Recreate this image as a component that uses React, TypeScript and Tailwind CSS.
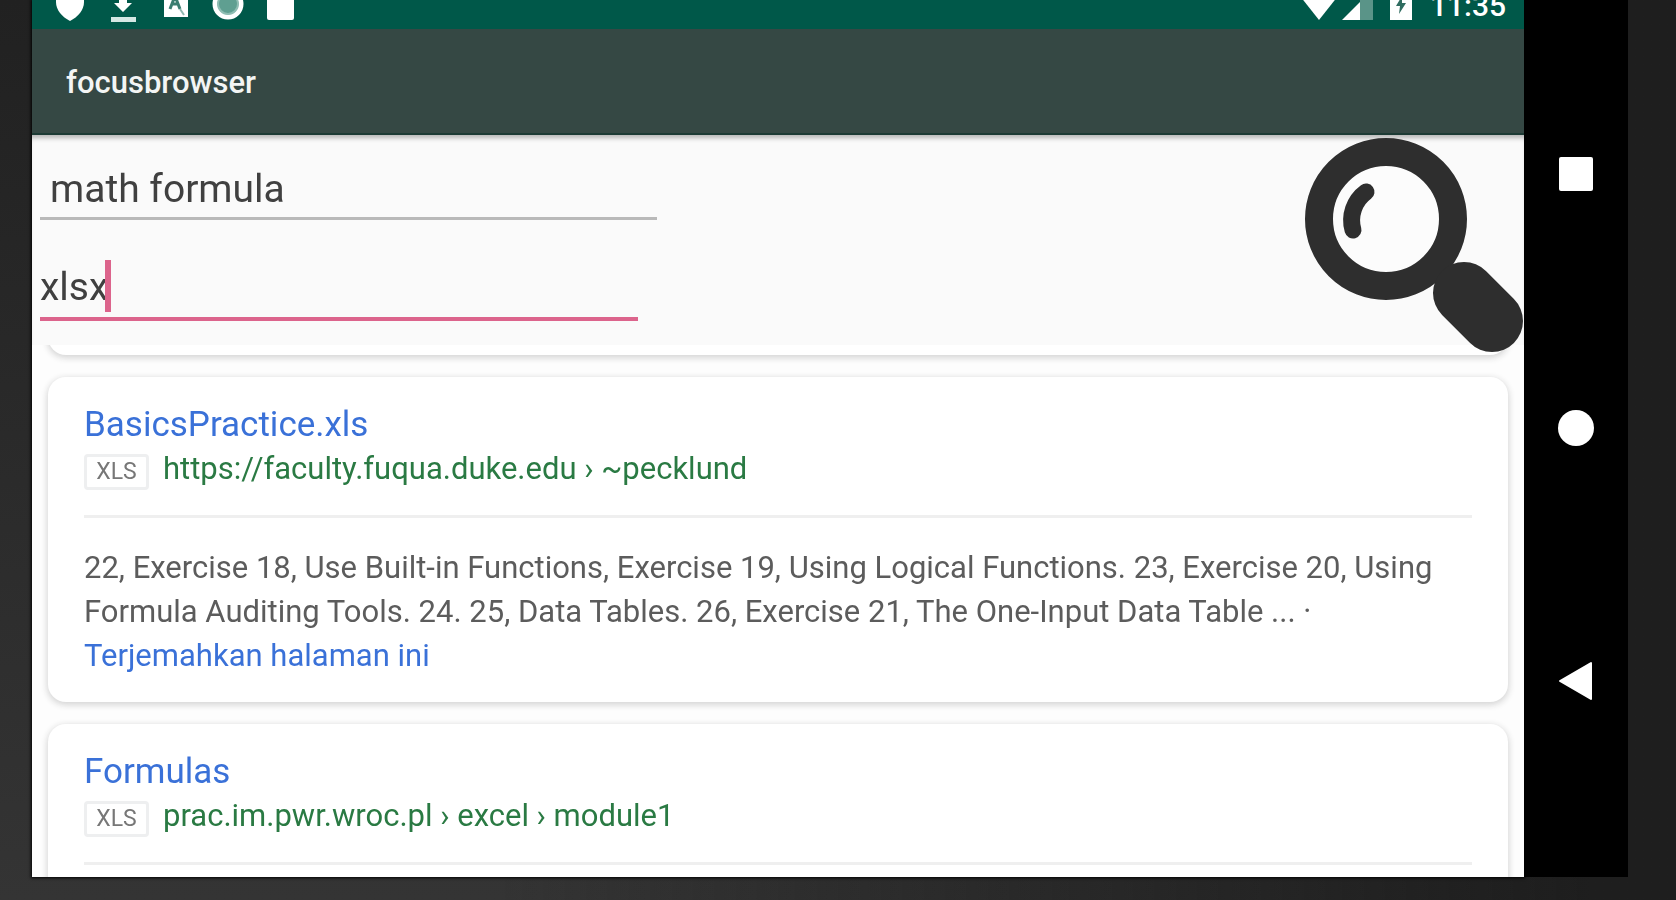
import { useState } from 'react';

type Result = {
  title: string;
  url: string;
  snippet?: string;
};

const results: Result[] = [
  {
    title: 'BasicsPractice.xls',
    url: 'https://faculty.fuqua.duke.edu › ~pecklund',
    snippet:
      '22, Exercise 18, Use Built-in Functions, Exercise 19, Using Logical Functions. 23, Exercise 20, Using Formula Auditing Tools. 24. 25, Data Tables. 26, Exercise 21, The One-Input Data Table ... ·',
  },
  {
    title: 'Formulas',
    url: 'prac.im.pwr.wroc.pl › excel › module1',
  },
];

function StatusBar() {
  return (
    <div className="flex h-[29px] shrink-0 items-start justify-between overflow-hidden bg-[#005849] pl-6 pr-[18px]">
      <div className="flex gap-6">
        <svg width="28" height="24" viewBox="0 0 28 24" aria-hidden="true">
          <path d="M0 -10H28V2C28 10 22 17 14 21C6 17 0 10 0 2Z" fill="#fff" />
        </svg>
        <svg width="28" height="24" viewBox="0 0 28 24" aria-hidden="true">
          <path d="M11 -4H19V3H24L15 12L6 3H11Z" fill="#fff" />
          <path d="M3 17H28V22H3Z" fill="#d5e8e4" />
        </svg>
        <svg width="28" height="24" viewBox="0 0 28 24" aria-hidden="true">
          <path d="M4 -8H28V17H4Z" fill="#fff" />
          <path d="M10 9L15 -4L20 9M12 4H18" fill="none" stroke="#3b7d70" strokeWidth="3" />
          <path d="M20 9L24 15" stroke="#8fb8b0" strokeWidth="2" />
        </svg>
        <svg width="32" height="24" viewBox="0 0 32 24" className="-mr-1" aria-hidden="true">
          <circle cx="16" cy="4" r="13" fill="#5f9f91" stroke="#fff" strokeWidth="5" />
          <circle cx="16" cy="4" r="10" fill="none" stroke="#8fbdb3" strokeWidth="2" />
        </svg>
        <svg width="30" height="24" viewBox="0 0 30 24" aria-hidden="true">
          <rect x="3" y="-10" width="27" height="30" rx="2" fill="#fff" />
        </svg>
      </div>
      <div className="flex items-start">
        <svg width="34" height="24" viewBox="0 0 34 24" aria-hidden="true">
          <path d="M-2 -4H36L17 20Z" fill="#fff" />
        </svg>
        <svg width="34" height="24" viewBox="0 0 34 24" className="ml-1" aria-hidden="true">
          <path d="M20 -10H33V20H20Z" fill="#5a9488" />
          <path d="M2 20L20 2V20Z" fill="#fff" />
        </svg>
        <svg width="22" height="24" viewBox="0 0 22 24" className="ml-4" aria-hidden="true">
          <path d="M0 -8H22V20H0Z" fill="#fff" />
          <path d="M12 -4L6 6H10L9 14L16 3H12Z" fill="#2f6c60" />
        </svg>
        <span className="-mt-3 ml-[18px] text-[30px] font-medium leading-[36px] text-white">11:35</span>
      </div>
    </div>
  );
}

function SearchIcon() {
  return (
    <svg width="220" height="218" viewBox="0 0 220 218" aria-hidden="true">
      <circle cx="82" cy="84" r="67" fill="#fcfcfc" stroke="#2e2e2e" strokeWidth="28" />
      <path d="M160 158L188 186" stroke="#2e2e2e" strokeWidth="62" strokeLinecap="round" />
      <path d="M62 57A35 35 0 0 0 49 95" fill="none" stroke="#2e2e2e" strokeWidth="17" strokeLinecap="round" />
    </svg>
  );
}

function SearchForm() {
  const [query, setQuery] = useState('math formula');
  const [fileType, setFileType] = useState('xlsx');
  return (
    <form
      className="relative h-[210px] shrink-0 bg-[#fafafa] pl-2 shadow-[inset_0_6px_5px_-3px_rgba(0,0,0,0.28)]"
      onSubmit={(event) => event.preventDefault()}
    >
      <input
        aria-label="Search query"
        className="mt-[26px] block h-[59px] w-[617px] border-b-[3px] border-[#b9b9b9] bg-transparent px-2.5 text-[39px] text-[#404040] outline-none"
        value={query}
        onChange={(event) => setQuery(event.target.value)}
      />
      <div className="relative mt-8 w-[598px]">
        <input
          aria-label="File type"
          className="block h-[69px] w-full border-b-[4px] border-[#dc648c] bg-transparent pt-1 text-[39px] text-[#404040] outline-none"
          value={fileType}
          onChange={(event) => setFileType(event.target.value)}
        />
        <span className="absolute left-[65px] top-2 h-[52px] w-[6px] bg-[#dc648c]" />
      </div>
      <button type="submit" aria-label="Search" className="absolute right-0 top-0 z-10">
        <SearchIcon />
      </button>
    </form>
  );
}

function ResultCard({ result }: { result: Result }) {
  return (
    <article className="rounded-[18px] bg-white px-9 pb-6 pt-[26px] shadow-[0_2px_6px_1px_rgba(32,33,36,0.18)]">
      <h2 className="text-[35px] leading-[44px]">
        <a href="#result" className="text-[#3a71d8]">{result.title}</a>
      </h2>
      <div className="flex h-11 items-center gap-3.5">
        <span className="mt-1.5 flex h-[36px] w-[65px] items-center justify-center rounded-[4px] border-[3px] border-[#eeeff0] text-[23px] text-[#777]">
          XLS
        </span>
        <cite className="text-[31px] not-italic leading-[44px] text-[#2a7a43]">{result.url}</cite>
      </div>
      <hr className="mb-7 mt-6 border-0 border-t-[3px] border-[#efefef]" />
      {result.snippet && (
        <p className="text-[31px] leading-[44px] text-[#5c5c5c]">
          {result.snippet}
          <a href="#translate" className="block text-[#3a71d8]">Terjemahkan halaman ini</a>
        </p>
      )}
    </article>
  );
}

function NavigationBar() {
  return (
    <nav aria-label="System" className="flex w-[104px] shrink-0 flex-col items-center justify-between bg-black pb-[176px] pt-[154px]">
      <button type="button" aria-label="Recent apps">
        <svg width="40" height="40" viewBox="0 0 40 40">
          <rect x="3" y="3" width="34" height="34" rx="2" fill="#fff" />
        </svg>
      </button>
      <button type="button" aria-label="Home">
        <svg width="40" height="40" viewBox="0 0 40 40">
          <circle cx="20" cy="20" r="18" fill="#fff" />
        </svg>
      </button>
      <button type="button" aria-label="Back">
        <svg width="40" height="40" viewBox="0 0 40 40">
          <path d="M4 20L35 2V38Z" fill="#fff" stroke="#fff" strokeWidth="2" strokeLinejoin="round" />
        </svg>
      </button>
    </nav>
  );
}

export default function App() {
  return (
    <div className="flex h-screen bg-linear-to-b from-[#212121] to-[#343434] pb-[23px] pl-8 font-['Roboto',sans-serif]">
      <div className="fixed inset-0 bg-linear-to-r from-transparent from-30% to-[#1e1e1e] to-95%" />
      <main className="relative flex min-w-0 flex-1 flex-col overflow-hidden bg-[#fdfdfd] shadow-[0_0_3px_1px_#000]">
        <StatusBar />
        <header className="flex h-[106px] shrink-0 items-center border-b-2 border-[#1d3b35] bg-[#354844] px-[34px] pt-1">
          <h1 className="text-[31px] font-medium text-[#f3f5f4]">focusbrowser</h1>
        </header>
        <SearchForm />
        <section aria-label="Results" className="flex flex-col gap-[22px] overflow-hidden px-4">
          <div className="-mt-8 h-[42px] shrink-0 rounded-b-[18px] bg-white shadow-[0_2px_6px_1px_rgba(32,33,36,0.18)]" />
          {results.map((result) => (
            <ResultCard key={result.title} result={result} />
          ))}
        </section>
      </main>
      <div className="relative mr-12 flex">
        <NavigationBar />
      </div>
    </div>
  );
}
